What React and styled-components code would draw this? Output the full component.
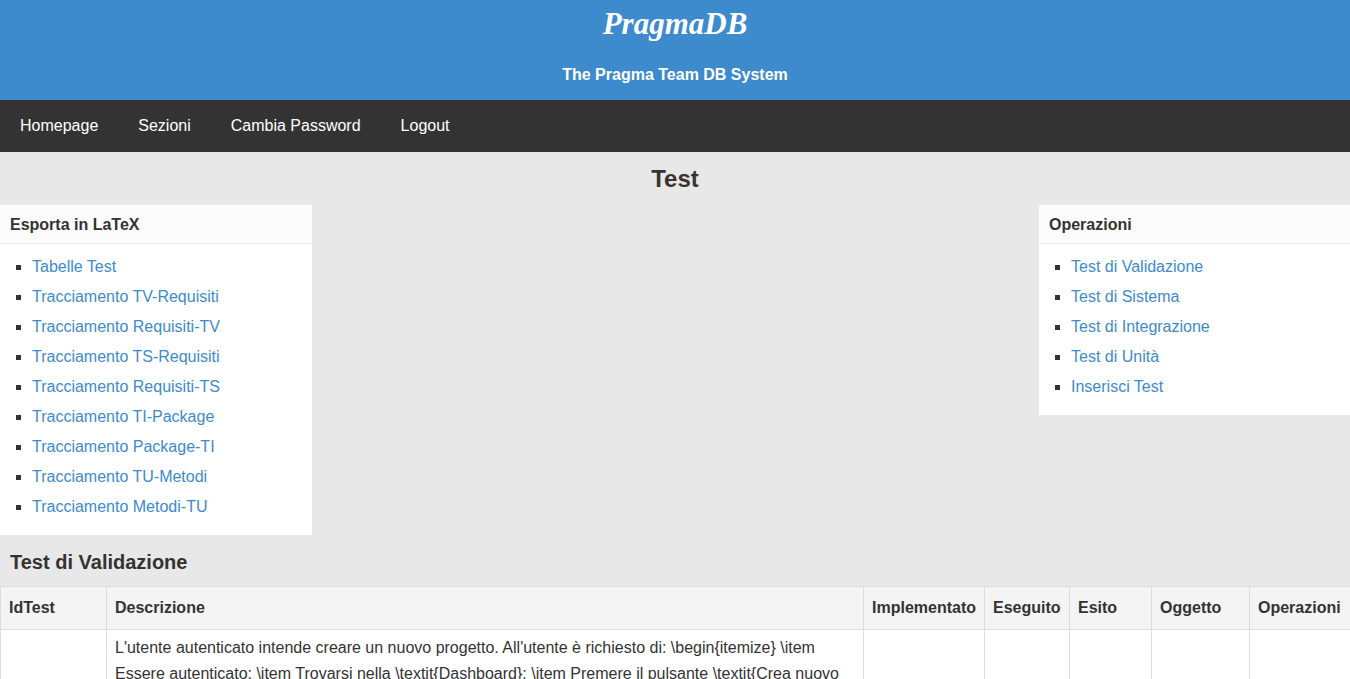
import React from 'react'
import styled, { createGlobalStyle } from 'styled-components'

const GlobalStyle = createGlobalStyle`
  html, body {
    margin: 0;
    padding: 0;
    background: #e8e8e8;
    font-family: "Liberation Sans", Arial, sans-serif;
    color: #333;
  }
`

const Header = styled.header`
  background: #3d8bcd;
  color: #fff;
  text-align: center;
  height: 100px;
  box-sizing: border-box;
  padding-top: 1px;
`

const Title = styled.h1`
  margin: 0;
  font-family: "Liberation Serif", "Times New Roman", serif;
  font-style: italic;
  font-weight: bold;
  font-size: 31px;
  line-height: 46px;
`

const Subtitle = styled.p`
  margin: 18px 0 0;
  font-weight: bold;
  font-size: 16px;
  line-height: 20px;
`

const Nav = styled.nav`
  background: #333;
  display: flex;
  height: 52px;
`

const NavLink = styled.a`
  color: #fff;
  text-decoration: none;
  font-size: 16px;
  line-height: 52px;
  padding: 0 20px;
`

const PageTitle = styled.h2`
  margin: 0;
  text-align: center;
  font-size: 24px;
  line-height: 29px;
  padding: 12px 0;
  color: #3a322e;
`

const PanelRow = styled.div`
  display: flex;
  justify-content: space-between;
  align-items: flex-start;
`

const Panel = styled.section`
  background: #fff;
  width: ${p => p.$width}px;
`

const PanelHead = styled.h4`
  margin: 0;
  background: #fcfcfc;
  border-bottom: 1px solid #eee;
  font-size: 16px;
  line-height: 19px;
  padding: 10px 10px 9px;
  color: #333;
`

const LinkList = styled.ul`
  list-style: square;
  margin: 0;
  padding: 8px 0 13px 32px;
  font-size: 16px;
  line-height: 30px;
`

const ListLink = styled.a`
  color: #3d8bcd;
  text-decoration: none;
`

const SectionTitle = styled.h3`
  margin: 0;
  font-size: 20px;
  line-height: 24px;
  padding: 15px 10px 12px;
  color: #333;
`

const Table = styled.table`
  width: 100%;
  table-layout: fixed;
  border-collapse: collapse;
  background: #fff;
  font-size: 16px;
`

const Th = styled.th`
  background: #f4f4f4;
  border: 1px solid #ddd;
  text-align: left;
  padding: 8px 8px;
  line-height: 26px;
  font-weight: bold;
  color: #333;
  white-space: nowrap;
`

const Td = styled.td`
  border: 1px solid #ddd;
  padding: 5px 8px;
  line-height: 26px;
  vertical-align: top;
  color: #333;
`

const latexLinks = [
  'Tabelle Test',
  'Tracciamento TV-Requisiti',
  'Tracciamento Requisiti-TV',
  'Tracciamento TS-Requisiti',
  'Tracciamento Requisiti-TS',
  'Tracciamento TI-Package',
  'Tracciamento Package-TI',
  'Tracciamento TU-Metodi',
  'Tracciamento Metodi-TU',
]

const opLinks = [
  'Test di Validazione',
  'Test di Sistema',
  'Test di Integrazione',
  'Test di Unità',
  'Inserisci Test',
]

const columns = [
  ['IdTest', 106],
  ['Descrizione', 757],
  ['Implementato', 121],
  ['Eseguito', 85],
  ['Esito', 82],
  ['Oggetto', 98],
  ['Operazioni', 101],
]

const App = () => (
  <>
    <GlobalStyle />
    <Header>
      <Title>PragmaDB</Title>
      <Subtitle>The Pragma Team DB System</Subtitle>
    </Header>
    <Nav>
      {['Homepage', 'Sezioni', 'Cambia Password', 'Logout'].map(l => (
        <NavLink key={l} href="#">{l}</NavLink>
      ))}
    </Nav>
    <PageTitle>Test</PageTitle>
    <PanelRow>
      <Panel $width={312}>
        <PanelHead>Esporta in LaTeX</PanelHead>
        <LinkList>
          {latexLinks.map(l => <li key={l}><ListLink href="#">{l}</ListLink></li>)}
        </LinkList>
      </Panel>
      <Panel $width={311}>
        <PanelHead>Operazioni</PanelHead>
        <LinkList>
          {opLinks.map(l => <li key={l}><ListLink href="#">{l}</ListLink></li>)}
        </LinkList>
      </Panel>
    </PanelRow>
    <SectionTitle>Test di Validazione</SectionTitle>
    <Table>
      <colgroup>
        {columns.map(([n, w]) => <col key={n} style={{ width: w }} />)}
      </colgroup>
      <thead>
        <tr>
          {columns.map(([n]) => <Th key={n}>{n}</Th>)}
        </tr>
      </thead>
      <tbody>
        <tr>
          <Td></Td>
          <Td>
            L'utente autenticato intende creare un nuovo progetto. All'utente è richiesto di: \begin{'{itemize}'} \item
            Essere autenticato; \item Trovarsi nella \textit{'{Dashboard}'}; \item Premere il pulsante \textit{'{Crea nuovo progetto}'}; \item Inserire il nome del progetto; \end{'{itemize}'}
          </Td>
          <Td></Td>
          <Td></Td>
          <Td></Td>
          <Td></Td>
          <Td></Td>
        </tr>
      </tbody>
    </Table>
  </>
)

export default App
